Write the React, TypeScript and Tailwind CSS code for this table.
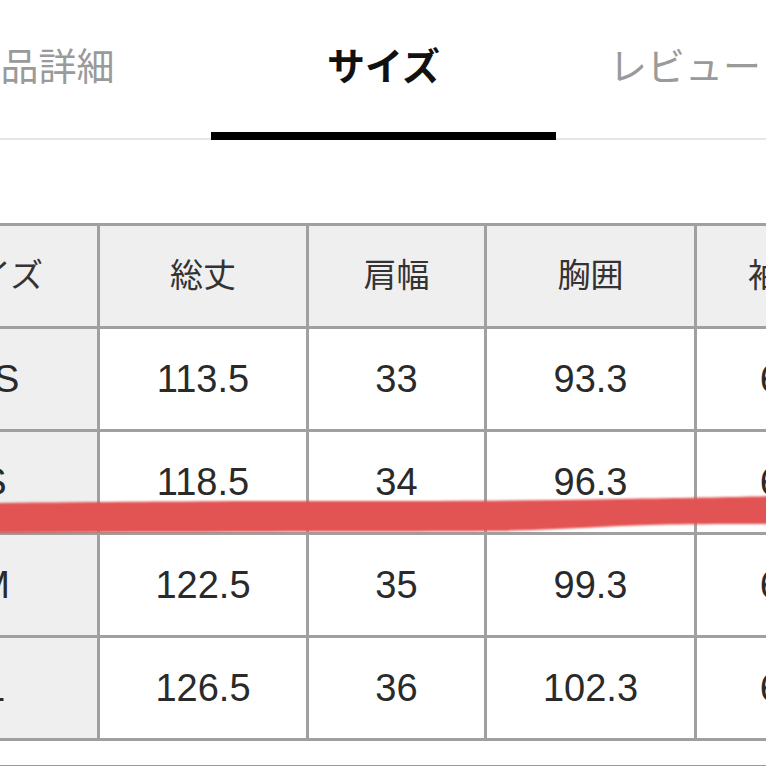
const tabs = [
  { label: "商品詳細", active: false },
  { label: "サイズ", active: true },
  { label: "レビュー", active: false },
];

const columns = ["サイズ", "総丈", "肩幅", "胸囲", "袖丈"];

const rows = [
  ["XS", "113.5", "33", "93.3", "60"],
  ["S", "118.5", "34", "96.3", "61"],
  ["M", "122.5", "35", "99.3", "62"],
  ["L", "126.5", "36", "102.3", "63"],
];

function Tabs() {
  return (
    <div className="h-[140px] w-[766px] border-b-2 border-[#e6e6e6]">
      <div className="-ml-[134px] flex w-max">
        {tabs.map((tab, i) =>
          tab.active ? (
            <div
              key={tab.label}
              className="flex h-[140px] w-[345px] items-center justify-center border-b-8 border-black pt-[3px] text-[38px] font-bold text-[#111]"
            >
              {tab.label}
            </div>
          ) : (
            <div
              key={tab.label}
              className={
                i === 0
                  ? "flex h-[140px] w-[345px] items-center justify-center pb-[5px] text-[38px] text-[#9a9a9a]"
                  : "flex h-[140px] w-[345px] items-center justify-start pb-[5px] pl-[53px] text-[38px] text-[#9a9a9a]"
              }
            >
              {tab.label}
            </div>
          )
        )}
      </div>
    </div>
  );
}

function SizeTable() {
  return (
    <div className="-ml-[112px] mt-[83px] grid w-max grid-cols-[206px_206px_175px_207px_168px] auto-rows-[100px] gap-[3px] border-[3px] border-[#a0a0a0] bg-[#a0a0a0]">
      {columns.map((c) => (
        <div key={c} className="flex items-center justify-center bg-[#efefef] text-[33px] text-[#333]">
          {c}
        </div>
      ))}
      {rows.map((row) =>
        row.map((cell, j) => (
          <div
            key={row[0] + j}
            className={
              j === 0
                ? "flex items-center justify-center bg-[#efefef] text-[38px] text-[#2a2a2a]"
                : "flex items-center justify-center bg-white text-[38px] text-[#2a2a2a]"
            }
          >
            {cell}
          </div>
        ))
      )}
    </div>
  );
}

function Scribble() {
  return (
    <svg className="pointer-events-none absolute left-0 top-0" width="766" height="766" viewBox="0 0 766 766">
      <defs>
        <filter id="soft" x="-5%" y="-50%" width="110%" height="200%">
          <feGaussianBlur stdDeviation="0.9" />
        </filter>
      </defs>
      <path
        d="M-10 503 C 120 502, 220 501, 300 501 C 420 501, 520 501, 620 499 C 690 498, 740 497, 780 496 L 780 524 C 720 524, 660 524, 620 526 C 580 528, 540 530, 500 531 C 380 532, 200 531, -10 533 Z"
        fill="#e25252"
        filter="url(#soft)"
      />
    </svg>
  );
}

export default function App() {
  return (
    <div
      className="relative h-[766px] w-[766px] overflow-hidden bg-white"
      style={{ fontFamily: '"Liberation Sans", "Noto Sans CJK JP", sans-serif' }}
    >
      <Tabs />
      <SizeTable />
      <div className="mt-[24px] w-[766px] border-t border-[#9a9a9a]" />
      <Scribble />
    </div>
  );
}
